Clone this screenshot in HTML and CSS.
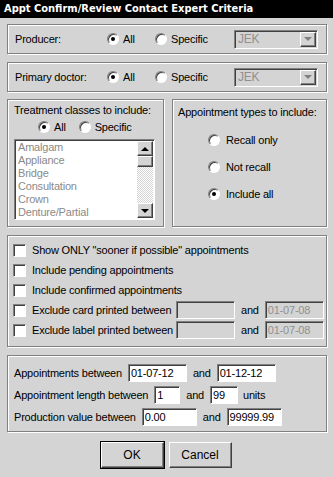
FILE: index.html
```html
<!DOCTYPE html>
<html>
<head>
<meta charset="UTF-8">
<title>Appt Confirm/Review Contact Expert Criteria</title>
<link rel="stylesheet" href="styles.css">
</head>
<body>
	<div class="title">Appt Confirm/Review Contact Expert Criteria</div>

	<div class="dialog">

		<!-- producer -->
		<div class="group line-box">
			<span class="line-label">Producer:</span>
			<span class="opt opt-all"><span class="radio on"></span>All</span>
			<span class="opt"><span class="radio"></span>Specific</span>
			<div class="combo">JEK<span class="combo-btn"><span class="tri-grey"></span></span></div>
		</div>

		<!-- primary doctor -->
		<div class="group line-box second">
			<span class="line-label">Primary doctor:</span>
			<span class="opt opt-all"><span class="radio on"></span>All</span>
			<span class="opt"><span class="radio"></span>Specific</span>
			<div class="combo">JEK<span class="combo-btn"><span class="tri-grey"></span></span></div>
		</div>

		<div class="pair">
			<div class="group treat-box">
				<div class="treat-head">Treatment classes to include:</div>
				<div class="treat-opts">
					<span class="opt"><span class="radio on"></span>All</span>
					<span class="opt"><span class="radio"></span>Specific</span>
				</div>
				<div class="listbox">
					<ul class="items">
						<li>Amalgam</li>
						<li>Appliance</li>
						<li>Bridge</li>
						<li>Consultation</li>
						<li>Crown</li>
						<li>Denture/Partial</li>
					</ul>
					<div class="scroll">
						<span class="sbtn"><span class="tri-up"></span></span>
						<span class="thumb"></span>
						<span class="track"></span>
						<span class="sbtn"><span class="tri-down"></span></span>
					</div>
				</div>
			</div>

			<div class="group types-box">
				<div class="types-head">Appointment types to include:</div>
				<div class="types-list">
					<span class="opt"><span class="radio"></span>Recall only</span>
					<span class="opt"><span class="radio"></span>Not recall</span>
					<span class="opt"><span class="radio on"></span>Include all</span>
				</div>
			</div>
		</div>

		<!-- check options -->
		<div class="group checks-box">
			<div class="check-row"><span class="check"></span>Show ONLY "sooner if possible" appointments</div>
			<div class="check-row"><span class="check"></span>Include pending appointments</div>
			<div class="check-row"><span class="check"></span>Include confirmed appointments</div>
			<div class="check-row">
				<span class="check"></span><span class="check-label">Exclude card printed between</span>
				<span class="field off w59"></span><span class="and">and</span><span class="field off w59 grey">01-07-08</span>
			</div>
			<div class="check-row">
				<span class="check"></span><span class="check-label">Exclude label printed between</span>
				<span class="field off w59"></span><span class="and">and</span><span class="field off w59 grey">01-07-08</span>
			</div>
		</div>

		<!-- ranges -->
		<div class="group range-box">
			<div class="range-row">
				<span class="range-label">Appointments between</span><span class="field w59">01-07-12</span><span class="and">and</span><span class="field w59">01-12-12</span>
			</div>
			<div class="range-row">
				<span class="range-label">Appointment length between</span><span class="field w26">1</span><span class="and">and</span><span class="field w28">99</span><span class="units">units</span>
			</div>
			<div class="range-row">
				<span class="range-label">Production value between</span><span class="field w55">0.00</span><span class="and">and</span><span class="field w55">99999.99</span>
			</div>
		</div>

		<div class="buttons">
			<button class="btn default">OK</button>
			<button class="btn">Cancel</button>
		</div>

	</div>
</body>
</html>
```

FILE: styles.css
```css
body {
	margin: 0;
	background: #d4d4d4;
	font-family: "Liberation Sans", Arial, sans-serif;
	font-size: 11px;
	letter-spacing: -0.2px;
	color: #000;
	width: 333px;
	height: 477px;
	overflow: hidden;
}

.title {
	height: 18px;
	line-height: 18px;
	background: #000;
	color: #fff;
	font-family: "DejaVu Sans Condensed", "DejaVu Sans", sans-serif;
	font-weight: bold;
	font-size: 11px;
	letter-spacing: 0;
	padding-left: 4px;
}

.dialog {
	display: flex;
	flex-direction: column;
	padding: 6px 0 0 7px;
}

/* etched frame */
.group {
	box-sizing: border-box;
	width: 320px;
	border: 1px solid #808080;
	box-shadow: inset 1px 1px 0 #fff, 1px 1px 0 #fff;
}

.line-box {
	height: 30px;
	display: flex;
	align-items: center;
	padding-left: 7px;
}

.line-box.second {
	margin-top: 8px;
}

.line-label {
	width: 92px;
}

.opt {
	display: inline-flex;
	align-items: center;
	gap: 4px;
	height: 14px;
	white-space: nowrap;
}

.opt-all {
	width: 48px;
}

.radio {
	box-sizing: border-box;
	width: 12px;
	height: 12px;
	border-radius: 50%;
	background: #fff;
	border: 1px solid;
	border-color: #808080 #fff #fff #808080;
	box-shadow: inset 1px 1px 0 #404040;
	display: inline-flex;
	align-items: center;
	justify-content: center;
	flex: none;
}

.radio.on::after {
	content: "";
	width: 4px;
	height: 4px;
	border-radius: 50%;
	background: #000;
}

.combo {
	box-sizing: border-box;
	margin-left: auto;
	margin-right: 8px;
	width: 84px;
	height: 19px;
	border: 1px solid;
	border-color: #808080 #fff #fff #808080;
	box-shadow: inset 1px 1px 0 #404040;
	color: #909090;
	font-size: 12px;
	display: flex;
	align-items: center;
	padding-left: 3px;
}

.combo-btn {
	box-sizing: border-box;
	margin-left: auto;
	margin-right: 1px;
	width: 16px;
	height: 15px;
	border: 1px solid;
	border-color: #fff #404040 #404040 #fff;
	box-shadow: inset -1px -1px 0 #808080;
	display: flex;
	align-items: center;
	justify-content: center;
}

.tri-grey {
	border-left: 4px solid transparent;
	border-right: 4px solid transparent;
	border-top: 4px solid #808080;
}

.pair {
	display: flex;
	gap: 8px;
	margin-top: 7px;
}

.treat-box {
	width: 157px;
	height: 128px;
	padding: 4px 0 0 6px;
}

.treat-head {
	line-height: 12px;
}

.treat-opts {
	display: flex;
	gap: 13px;
	padding-left: 24px;
	margin-top: 4px;
}

.listbox {
	box-sizing: border-box;
	margin-top: 5px;
	width: 141px;
	height: 81px;
	background: #fff;
	border: 1px solid;
	border-color: #808080 #fff #fff #808080;
	box-shadow: inset 1px 1px 0 #404040;
	display: flex;
	padding: 1px 1px 1px 2px;
}

.items {
	list-style: none;
	margin: 0;
	padding: 0 0 0 1px;
	flex: 1;
	color: #8a8a8a;
	line-height: 13px;
	overflow: hidden;
}

.scroll {
	width: 16px;
	display: flex;
	flex-direction: column;
}

.sbtn, .thumb {
	box-sizing: border-box;
	width: 16px;
	height: 15px;
	background: #d4d4d4;
	border: 1px solid;
	border-color: #fff #404040 #404040 #fff;
	box-shadow: inset -1px -1px 0 #808080;
	display: flex;
	align-items: center;
	justify-content: center;
}

.thumb {
	height: 11px;
}

.track {
	flex: 1;
	background: repeating-conic-gradient(#fff 0 25%, #d4d4d4 0 50%) 0 0 / 2px 2px;
}

.tri-up {
	border-left: 4px solid transparent;
	border-right: 4px solid transparent;
	border-bottom: 4px solid #000;
}

.tri-down {
	border-left: 4px solid transparent;
	border-right: 4px solid transparent;
	border-top: 4px solid #000;
}

.types-box {
	width: 155px;
	height: 128px;
	padding: 6px 0 0 5px;
}

.types-head {
	line-height: 12px;
}

.types-list {
	display: flex;
	flex-direction: column;
	gap: 13px;
	padding: 15px 0 0 30px;
}

.types-list .opt {
	gap: 6px;
}

.checks-box {
	height: 112px;
	margin-top: 8px;
	padding: 4px 0 0 5px;
}

.check-row {
	height: 20px;
	display: flex;
	align-items: center;
	white-space: nowrap;
}

.check {
	box-sizing: border-box;
	width: 13px;
	height: 13px;
	background: #fff;
	border: 1px solid;
	border-color: #808080 #fff #fff #808080;
	box-shadow: inset 1px 1px 0 #404040;
	margin-right: 6px;
	flex: none;
}

.check-label {
	width: 144px;
}

.field {
	box-sizing: border-box;
	height: 18px;
	background: #fff;
	border: 1px solid;
	border-color: #808080 #fff #fff #808080;
	box-shadow: inset 1px 1px 0 #404040;
	padding-left: 2px;
	display: inline-flex;
	align-items: center;
	flex: none;
}

.field.off {
	background: #d4d4d4;
}

.field.grey {
	color: #909090;
}

.w26 { width: 26px; }
.w28 { width: 28px; }
.w55 { width: 55px; }
.w59 { width: 59px; }

.and {
	margin: 0 6px;
}

.units {
	margin-left: 5px;
}

.range-box {
	height: 77px;
	margin-top: 8px;
	padding: 7px 0 0 6px;
	display: flex;
	flex-direction: column;
	gap: 3px;
}

.range-row {
	height: 19px;
	display: flex;
	align-items: center;
	white-space: nowrap;
}

.range-label {
	margin-right: 6px;
}

.buttons {
	display: flex;
	justify-content: center;
	gap: 5px;
	margin-top: 10px;
	padding-right: 8px;
}

.btn {
	box-sizing: border-box;
	width: 63px;
	height: 26px;
	background: #d4d4d4;
	font-family: "Liberation Sans", Arial, sans-serif;
	font-size: 12px;
	color: #000;
	border: 1px solid;
	border-color: #fff #404040 #404040 #fff;
	box-shadow: inset -1px -1px 0 #808080;
	padding: 0;
}

.btn.default {
	box-shadow: inset -1px -1px 0 #808080, 0 0 0 1px #000;
}
```
